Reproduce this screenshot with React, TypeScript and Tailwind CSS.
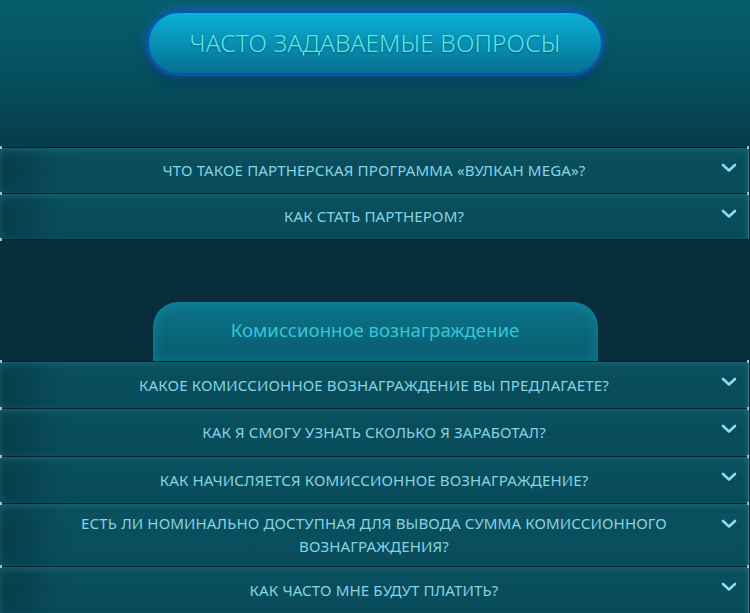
import React from "react";

const Chevron = () => (
  <svg width="16" height="10" viewBox="0 0 16 10" className="absolute right-[11px] top-[15px]">
    <path d="M2 2 L8 7.5 L14 2" fill="none" stroke="#8fd9f2" strokeWidth="2.6" strokeLinecap="round" strokeLinejoin="round" />
  </svg>
);

const Row = ({ text, h = 46 }: { text: React.ReactNode; h?: number }) => (
  <div
    className="relative w-[749px] border-t border-[#05232d] border-r border-r-[#2a7886] flex items-center justify-center px-[60px] text-center bg-[linear-gradient(180deg,#0c5867_0%,#0a4f5e_45%,#0a5363_100%)] shadow-[inset_0_2px_6px_rgba(80,170,190,0.25),inset_40px_0_30px_rgba(0,30,40,0.3)]"
    style={{ height: h }}
  >
    <span className="absolute left-0 top-[-2px] w-[2px] h-[3px] bg-[#8fc8d4]" />
    <span className="absolute right-[-1px] top-[-2px] w-[2px] h-[3px] bg-[#8fc8d4]" />
    <span className="text-[15.1px] leading-[23px] uppercase text-[#86d3e4] tracking-[0.1px]">{text}</span>
    <Chevron />
  </div>
);

export default function App() {
  return (
    <div className="w-[750px] h-[613px] overflow-hidden bg-[#072c3a] font-['Noto_Sans',sans-serif]">
      <div className="h-[147px] pt-[10px] flex justify-center bg-[linear-gradient(180deg,#075d6c_0%,#06505f_50%,#053c4a_100%)]">
        <div className="w-[458px] h-[66px] rounded-[33px] border-[3px] border-[#0a56aa] shadow-[0_0_8px_2px_rgba(20,110,200,0.55),0_6px_10px_rgba(0,20,40,0.4)] bg-[linear-gradient(180deg,#0bb0d3_0%,#0894b8_45%,#06708e_100%)] flex items-center justify-center">
          <span className="text-[24.5px] font-light text-[#5ae8e4] tracking-[0.1px] [text-shadow:0_1px_2px_rgba(0,40,60,0.5)]">
            ЧАСТО ЗАДАВАЕМЫЕ ВОПРОСЫ
          </span>
        </div>
      </div>
      <Row text="Что такое партнерская программа «Вулкан MEGA»?" />
      <Row text="Как стать партнером?" />
      <div className="h-[62px] border-t border-[#05232d] relative">
        <span className="absolute left-0 top-[-2px] w-[2px] h-[3px] bg-[#8fc8d4]" />
      </div>
      <div className="flex justify-center">
        <div className="w-[447px] h-[60px] rounded-t-[26px] border border-b-0 border-[#05303c] bg-[linear-gradient(180deg,#0b7488_0%,#0a6679_60%,#095b6c_100%)] shadow-[inset_0_0_14px_rgba(20,160,190,0.5)] flex items-center justify-center pb-[4px]">
          <span className="text-[18.6px] text-[#34c6da]">Комиссионное вознаграждение</span>
        </div>
      </div>
      <Row text="Какое комиссионное вознаграждение вы предлагаете?" h={47} />
      <Row text="Как я смогу узнать сколько я заработал?" h={48} />
      <Row text="Как начисляется комиссионное вознаграждение?" h={47} />
      <Row text={<>Есть ли номинально доступная для вывода сумма комиссионного<br />вознаграждения?</>} h={63} />
      <Row text="Как часто мне будут платить?" h={47} />
    </div>
  );
}
